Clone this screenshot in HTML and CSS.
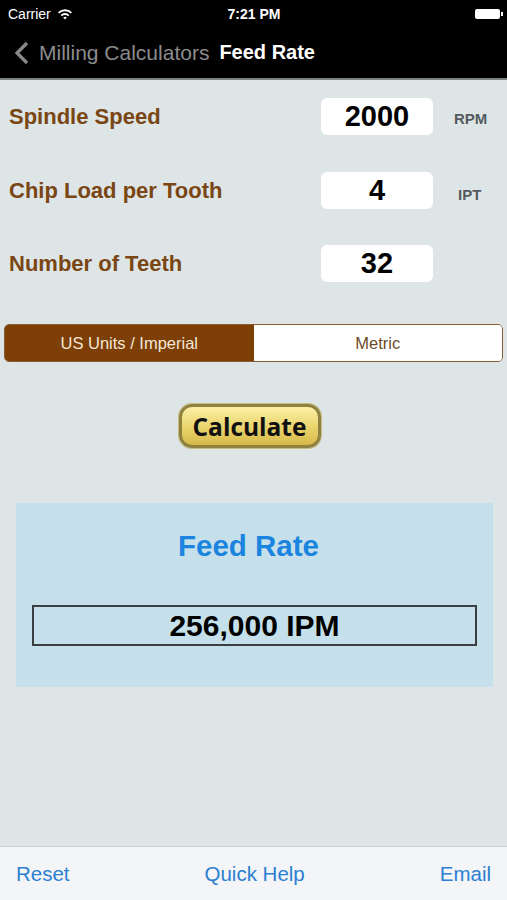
FILE: index.html
```html
<!DOCTYPE html>
<html lang="en">
<head>
    <meta charset="UTF-8">
    <meta name="viewport" content="width=device-width, initial-scale=1.0">
    <title>Feed Rate</title>
    <link rel="stylesheet" href="styles.css">
</head>
<body>
    <div class="screen">
        <div class="statusBar">
            <span class="carrier">Carrier
                <svg class="wifi" width="16" height="12" viewBox="0 0 16 12">
                    <path d="M1 4.2a10 10 0 0 1 14 0l-1.3 1.4a8 8 0 0 0-11.4 0z" fill="#fff"/>
                    <path d="M3.6 6.9a6.2 6.2 0 0 1 8.8 0l-1.3 1.4a4.4 4.4 0 0 0-6.2 0z" fill="#fff"/>
                    <path d="M6.2 9.6a2.5 2.5 0 0 1 3.6 0L8 11.5z" fill="#fff"/>
                </svg>
            </span>
            <span class="time">7:21 PM</span>
            <span class="battery"><i></i></span>
        </div>
        <div class="navBar">
            <svg class="back" width="16" height="24" viewBox="0 0 16 24">
                <path d="M13 2L3 12l10 10" fill="none" stroke="#8a8a8a" stroke-width="3.2"/>
            </svg>
            <span class="backText">Milling Calculators</span>
            <span class="title">Feed Rate</span>
        </div>

        <div class="content">
            <div class="row row1">
                <span class="label">Spindle Speed</span>
                <span class="field">2000</span>
                <span class="unit">RPM</span>
            </div>
            <div class="row row2">
                <span class="label">Chip Load per Tooth</span>
                <span class="field">4</span>
                <span class="unit unitIpt">IPT</span>
            </div>
            <div class="row row3">
                <span class="label">Number of Teeth</span>
                <span class="field">32</span>
                <span class="unit"></span>
            </div>

            <div class="segment">
                <span class="seg on">US Units / Imperial</span>
                <span class="seg">Metric</span>
            </div>

            <div class="calcWrap">
                <span class="calcBtn">Calculate</span>
            </div>

            <div class="result">
                <div class="resultTitle">Feed Rate</div>
                <div class="resultBox">256,000 IPM</div>
            </div>
        </div>

        <div class="toolBar">
            <span>Reset</span>
            <span>Quick Help</span>
            <span>Email</span>
        </div>
    </div>
</body>
</html>
```
FILE: styles.css
```css
*{
    margin: 0;
    padding: 0;
    box-sizing: border-box;
}
body{
    font-family: "Liberation Sans", Arial, sans-serif;
    background: #dde5e7;
}
.screen{
    width: 507px;
    height: 900px;
    display: flex;
    flex-direction: column;
}
.statusBar{
    height: 27px;
    background: #000;
    color: #fff;
    font-size: 14px;
    display: flex;
    align-items: center;
    justify-content: space-between;
    padding: 0 7px 0 8px;
}
.carrier{
    width: 90px;
    display: flex;
    align-items: center;
    gap: 6px;
}
.time{
    font-weight: bold;
    font-size: 14px;
}
.battery{
    width: 90px;
    display: flex;
    justify-content: flex-end;
    align-items: center;
}
.battery i{
    display: block;
    width: 25px;
    height: 10px;
    background: #fff;
    border-radius: 2px;
    position: relative;
}
.battery i::after{
    content: '';
    position: absolute;
    right: -3px;
    top: 3px;
    width: 2px;
    height: 4px;
    background: #fff;
}
.navBar{
    height: 53px;
    background: #000;
    border-bottom: 2px solid #7e8486;
    display: flex;
    align-items: center;
    padding: 0 0 0 14px;
    font-size: 21px;
}
.back{
    margin-right: 9px;
}
.backText{
    color: #8c8c8c;
}
.title{
    color: #fff;
    font-weight: bold;
    margin-left: 10px;
    font-size: 20px;
}
.content{
    flex: 1;
    background: #dde5e7;
}
.row{
    display: flex;
    align-items: center;
    height: 37px;
    padding-left: 9px;
}
.row1{
    margin-top: 18px;
}
.row2{
    margin-top: 37px;
}
.row3{
    margin-top: 36px;
}
.label{
    width: 312px;
    color: #7a4613;
    font-size: 22px;
    font-weight: bold;
}
.field{
    width: 112px;
    height: 37px;
    background: #fff;
    border-radius: 6px;
    text-align: center;
    line-height: 37px;
    font-size: 29px;
    font-weight: bold;
    color: #000;
}
.unit{
    margin-left: 21px;
    color: #555b5e;
    font-size: 15px;
    font-weight: bold;
    padding-top: 3px;
}
.unitIpt{
    margin-left: 25px;
    padding-top: 8px;
}
.segment{
    display: flex;
    margin: 42px 4px 0 4px;
    height: 38px;
    border: 1px solid #8a5a30;
    border-radius: 5px;
    overflow: hidden;
    font-size: 16.5px;
}
.seg{
    flex: 1;
    display: flex;
    align-items: center;
    justify-content: center;
    background: #fff;
    color: #6e4b2c;
}
.seg.on{
    background: #7d3f05;
    color: #f3e6d8;
}
.calcWrap{
    display: flex;
    justify-content: center;
    margin-top: 42px;
    padding-right: 8px;
}
.calcBtn{
    width: 142px;
    height: 44px;
    border-radius: 13px;
    border: 3px solid #8f8140;
    box-shadow: 0 0 0 1px #c9bb7a;
    background: linear-gradient(#fbf0a6, #e9d36a 55%, #d7b94a);
    display: flex;
    align-items: center;
    justify-content: center;
    font-family: "Open Sans", sans-serif;
    font-weight: bold;
    font-size: 24.5px;
    color: #111;
}
.result{
    margin: 55px 14px 0 16px;
    height: 184px;
    background: #c5e0ea;
    padding: 16px 16px 0 16px;
}
.resultTitle{
    text-align: center;
    color: #1b84e0;
    font-size: 29.5px;
    font-weight: bold;
    height: 54px;
    line-height: 54px;
    padding-right: 12px;
}
.resultBox{
    margin-top: 32px;
    height: 41px;
    border: 2px solid #3a3f42;
    text-align: center;
    line-height: 37px;
    font-size: 30px;
    font-weight: bold;
    color: #000;
}
.toolBar{
    height: 54px;
    background: #f3f5f6;
    border-top: 1px solid #c9cfd1;
    display: flex;
    align-items: center;
    justify-content: space-between;
    padding: 0 16px 0 16px;
    font-size: 20.5px;
    color: #2c80d2;
}
```
